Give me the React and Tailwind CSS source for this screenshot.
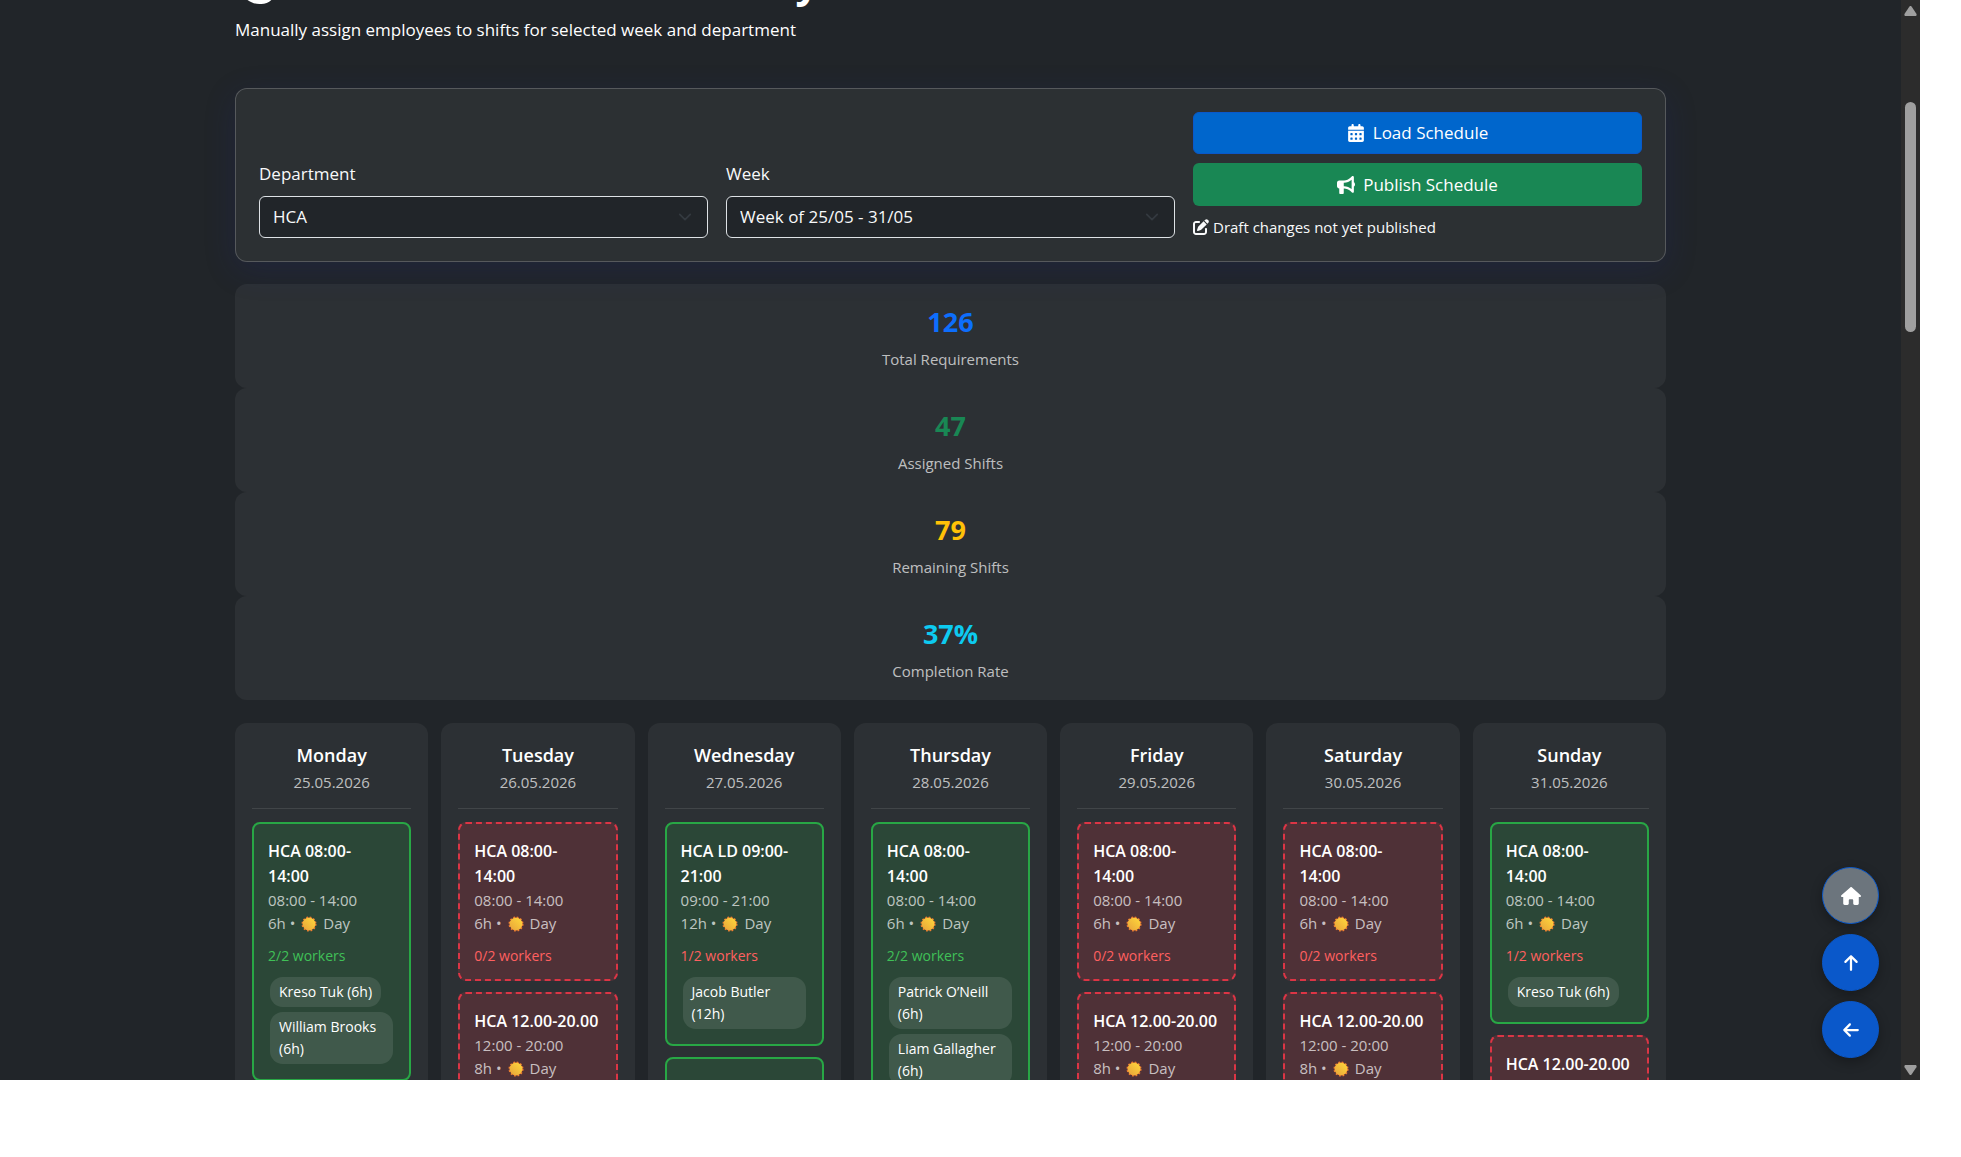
import {
  FaArrowLeft,
  FaArrowUp,
  FaBullhorn,
  FaCalendarDays,
  FaHand,
  FaHouse,
  FaPenToSquare,
} from "react-icons/fa6";

const stats = [
  { value: "126", label: "Total Requirements", color: "text-[#0d6efd]" },
  { value: "47", label: "Assigned Shifts", color: "text-[#198754]" },
  { value: "79", label: "Remaining Shifts", color: "text-[#ffc107]" },
  { value: "37%", label: "Completion Rate", color: "text-[#0dcaf0]" },
];

const morning = {
  title: "HCA 08:00-\n14:00",
  time: "08:00 - 14:00",
  hours: "6h",
  needed: 2,
};

const afternoon = {
  title: "HCA 12.00-20.00",
  time: "12:00 - 20:00",
  hours: "8h",
  needed: 2,
  workers: [],
};

const longDay = {
  title: "HCA LD 09:00-\n21:00",
  time: "09:00 - 21:00",
  hours: "12h",
  needed: 2,
};

const days = [
  {
    name: "Monday",
    date: "25.05.2026",
    shifts: [{ ...morning, workers: ["Kreso Tuk (6h)", "William Brooks (6h)"] }],
  },
  {
    name: "Tuesday",
    date: "26.05.2026",
    shifts: [{ ...morning, workers: [] }, afternoon],
  },
  {
    name: "Wednesday",
    date: "27.05.2026",
    shifts: [
      { ...longDay, workers: ["Jacob Butler (12h)"] },
      { ...afternoon, workers: ["Kreso Tuk (8h)"] },
    ],
  },
  {
    name: "Thursday",
    date: "28.05.2026",
    shifts: [
      { ...morning, workers: ["Patrick O’Neill (6h)", "Liam Gallagher (6h)"] },
    ],
  },
  {
    name: "Friday",
    date: "29.05.2026",
    shifts: [{ ...morning, workers: [] }, afternoon],
  },
  {
    name: "Saturday",
    date: "30.05.2026",
    shifts: [{ ...morning, workers: [] }, afternoon],
  },
  {
    name: "Sunday",
    date: "31.05.2026",
    shifts: [{ ...morning, workers: ["Kreso Tuk (6h)"] }, afternoon],
  },
];

const SunIcon = () => (
  <svg viewBox="0 0 32 32" className="h-4 w-4" aria-hidden="true">
    <defs>
      <linearGradient id="sunFill" x1="1" y1="0" x2="0" y2="1">
        <stop offset="0" stopColor="#ffd93b" />
        <stop offset="1" stopColor="#e8a33a" />
      </linearGradient>
    </defs>
    <circle
      cx="16"
      cy="16"
      r="13"
      fill="#f08030"
      stroke="#f08030"
      strokeWidth="4"
      strokeDasharray="3.4 3.4"
    />
    <circle cx="16" cy="16" r="12.5" fill="url(#sunFill)" />
  </svg>
);

const SelectField = ({ id, label, options }) => (
  <div>
    <label htmlFor={id} className="mb-[9px] block leading-[26px]">
      {label}
    </label>
    <div className="relative">
      <select
        id={id}
        className="block h-[42px] w-full appearance-none rounded-md border border-[#dee2e6] bg-[#212529] px-[13px] text-[#f8f9fa]"
      >
        {options.map((option) => (
          <option key={option}>{option}</option>
        ))}
      </select>
      <svg
        viewBox="0 0 16 16"
        className="pointer-events-none absolute top-[14px] right-4 h-[14px] w-[14px]"
        fill="none"
        stroke="#343a40"
        strokeWidth="2"
        strokeLinecap="round"
        strokeLinejoin="round"
      >
        <path d="m2 5 6 6 6-6" />
      </svg>
    </div>
  </div>
);

const ShiftCard = ({ shift }) => {
  const isStaffed = shift.workers.length > 0;
  const isFull = shift.workers.length >= shift.needed;

  return (
    <div
      className={`rounded-lg border-2 px-[14px] pt-[15px] pb-[13px] ${
        isStaffed
          ? "border-[#28a745] bg-[#28a745]/20"
          : "border-dashed border-[#dc3545] bg-[#dc3545]/20"
      }`}
    >
      <h3 className="text-base leading-[25px] font-semibold whitespace-pre-line text-white">
        {shift.title}
      </h3>
      <p className="text-[15px] leading-[23px] text-white/70">{shift.time}</p>
      <p className="flex items-center text-[15px] leading-[23px] text-white/70">
        <span className="mr-1.5">{shift.hours} •</span>
        <SunIcon />
        <span className="ml-1.5">Day</span>
      </p>
      <p
        className={`mt-[10px] text-sm leading-[21px] ${
          isFull ? "text-[#40c057]" : "text-[#ff6060]"
        }`}
      >
        {shift.workers.length}/{shift.needed} workers
      </p>
      {isStaffed && (
        <ul className="mt-[9px] flex flex-col items-start gap-[5px] p-0.5">
          {shift.workers.map((worker) => (
            <li
              key={worker}
              className="rounded-[13px] bg-white/10 px-[9px] py-1 text-sm leading-[22px] text-white"
            >
              {worker}
            </li>
          ))}
        </ul>
      )}
    </div>
  );
};

const DayColumn = ({ day }) => (
  <section className="rounded-xl bg-white/5 p-[17px]">
    <header className="mb-[13px] border-b border-white/10 pb-[14px] text-center">
      <h2 className="text-lg leading-[30px] font-semibold text-white">
        {day.name}
      </h2>
      <p className="text-[15px] leading-[24px] text-white/70">{day.date}</p>
    </header>
    <div className="flex flex-col gap-[11px]">
      {day.shifts.map((shift) => (
        <ShiftCard key={shift.title} shift={shift} />
      ))}
    </div>
  </section>
);

const Scrollbar = () => (
  <div
    className="flex w-[19px] shrink-0 flex-col items-center bg-[#2c2c2c]"
    aria-hidden="true"
  >
    <svg viewBox="0 0 13 10" className="mt-1.5 h-[10px] w-[13px]" fill="#9f9f9f">
      <path d="M5.3.7a1.5 1.5 0 0 1 2.4 0l4.7 7.1c.6 1 0 2.2-1.1 2.2H1.7C.6 10 0 8.8.6 7.8z" />
    </svg>
    <div className="mt-[86px] h-[230px] w-[11px] rounded-full bg-[#9f9f9f]" />
    <svg
      viewBox="0 0 13 10"
      className="mt-auto mb-[5px] h-[10px] w-[13px]"
      fill="#9f9f9f"
    >
      <path d="M5.3 9.3a1.5 1.5 0 0 0 2.4 0l4.7-7.1C13 1.2 12.4 0 11.3 0H1.7C.6 0 0 1.2.6 2.2z" />
    </svg>
  </div>
);

const fabClass =
  "flex h-[57px] w-[57px] items-center justify-center rounded-full border border-[#0a58ca] text-white shadow-[0_4px_12px_rgba(0,0,0,0.3)]";

const QuickNav = () => (
  <nav className="absolute right-[22px] bottom-[22px] flex flex-col gap-[10px]">
    <button type="button" aria-label="Home" className={`${fabClass} bg-[#6c757d]`}>
      <FaHouse className="h-[18px] w-5" />
    </button>
    <button
      type="button"
      aria-label="Scroll to top"
      className={`${fabClass} bg-[#0a58ca]`}
    >
      <FaArrowUp size={18} />
    </button>
    <button
      type="button"
      aria-label="Go back"
      className={`${fabClass} bg-[#0a58ca]`}
    >
      <FaArrowLeft size={18} />
    </button>
  </nav>
);

const App = () => {
  return (
    <div className="h-screen bg-white pr-[41px] pb-[77px] font-['Open_Sans','Noto_Sans',sans-serif] text-[17px] text-[#f8f9fa]">
      <div className="flex h-full overflow-hidden bg-[#212529]">
        <div className="relative min-w-0 flex-1 overflow-hidden">
          <main className="mx-auto w-full max-w-[1431px]">
            {/* page is scrolled down, only the foot of the title is in view */}
            <header className="-mt-[45px]">
              <h1 className="flex items-center gap-2 text-[41px] leading-[53px] font-bold text-white">
                <FaHand size={44} />
                Create Schedule Manually
              </h1>
              <p className="mt-[9px] leading-[26px] text-white">
                Manually assign employees to shifts for selected week and
                department
              </p>
            </header>

            <div className="mt-[45px] grid grid-cols-3 items-end gap-[18px] rounded-xl border border-white/20 bg-white/5 p-[23px] shadow-[0_8px_32px_rgba(31,38,135,0.2)]">
              <SelectField id="department" label="Department" options={["HCA"]} />
              <SelectField
                id="week"
                label="Week"
                options={["Week of 25/05 - 31/05"]}
              />
              <div>
                <button
                  type="button"
                  className="flex h-[42px] w-full items-center justify-center gap-2 rounded-md border border-[#0a58ca] bg-[#0066cc] text-white"
                >
                  <FaCalendarDays size={18} />
                  Load Schedule
                </button>
                <button
                  type="button"
                  className="mt-[9px] flex h-[43px] w-full items-center justify-center gap-2 rounded-md bg-[#198754] text-white"
                >
                  <FaBullhorn size={18} />
                  Publish Schedule
                </button>
                <p className="mt-[10px] flex items-center gap-1 text-[15px] leading-[22px]">
                  <FaPenToSquare size={16} />
                  Draft changes not yet published
                </p>
              </div>
            </div>

            <div className="mt-[22px]">
              {stats.map((stat) => (
                <div
                  key={stat.label}
                  className="rounded-xl bg-white/5 pt-[17px] pb-[18px] text-center"
                >
                  <p
                    className={`mb-[5px] text-[27px] leading-[42px] font-bold ${stat.color}`}
                  >
                    {stat.value}
                  </p>
                  <p className="text-[15px] leading-[22px] text-white/70">
                    {stat.label}
                  </p>
                </div>
              ))}
            </div>

            <div className="mt-[23px] grid grid-cols-7 gap-[13px]">
              {days.map((day) => (
                <DayColumn key={day.name} day={day} />
              ))}
            </div>
          </main>
          <QuickNav />
        </div>
        <Scrollbar />
      </div>
    </div>
  );
};

export default App;
